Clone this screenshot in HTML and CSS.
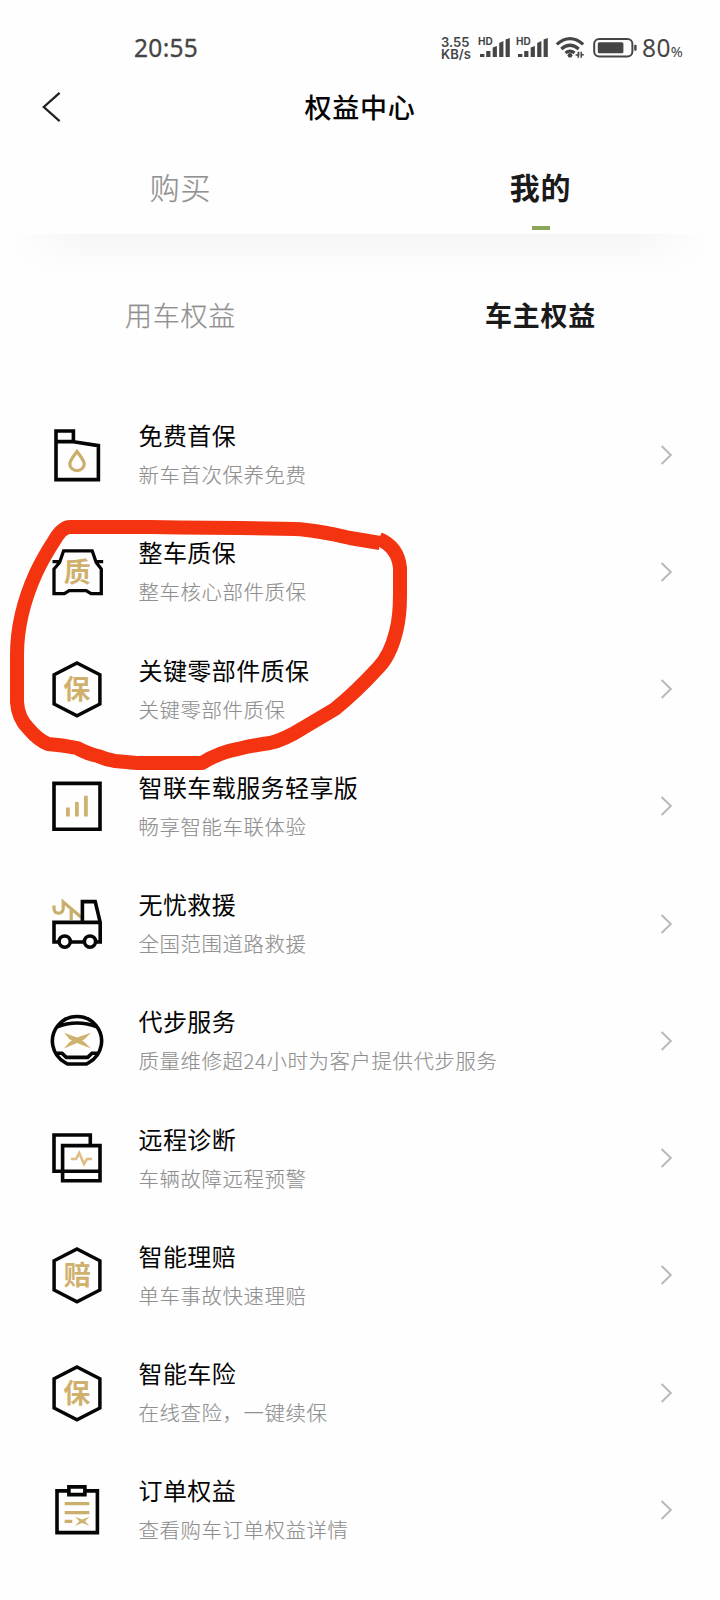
FILE: index.html
```html
<!DOCTYPE html>
<html lang="zh-CN">
<head>
<meta charset="utf-8">
<title>权益中心</title>
<link rel="stylesheet" href="styles.css">
</head>
<body>
<svg class="defs" width="0" height="0">
  <symbol id="next" viewBox="0 0 14 20"><path d="M1.6 1L10.8 10L1.6 19" fill="none" stroke="#b9b9b9" stroke-width="2"/></symbol>
  <symbol id="hex" viewBox="0 0 60 60"><path d="M29 4L51.9 15.8V45L29 56.8L6.1 45V15.8Z" fill="none" stroke="#050505" stroke-width="3.5"/></symbol>
  <symbol id="signal" viewBox="0 0 32 22"><path d="M1 20v-3h4.4v3zM7.2 20v-6h4.2v6zM13.7 20V10.5l4.2-1.5v11zM20.2 20V6l4.2-2v16zM26.6 20V2.5L30.8 1v19z" fill="#454545"/></symbol>
</svg>

<header class="status">
  <time class="clock">20:55</time>
  <div class="speed"><span>3.55</span><span>KB/s</span></div>
  <div class="cell"><svg width="32" height="22"><use href="#signal"/></svg><span class="hd">HD</span></div>
  <div class="cell"><svg width="32" height="22"><use href="#signal"/></svg><span class="hd">HD</span></div>
  <svg class="wifi" width="32" height="24" viewBox="0 0 32 24" fill="none" stroke="#454545" stroke-width="3.2">
    <path d="M1.8 8.4Q15 -3.2 28.2 8.4M6.3 13Q15 5.5 23.7 13M10.5 17Q15 13.3 19.5 17"/>
    <circle cx="15" cy="19.3" r="2.4" fill="#454545" stroke="none"/>
    <path d="M20.6 19h3v-3M23.3 15.8v6M26.2 15.8v6M26 18.8h2.8" stroke-width="1.5"/>
  </svg>
  <svg class="battery" width="46" height="22" viewBox="0 0 46 22">
    <rect x="1.2" y="2" width="38.2" height="17.4" rx="5" fill="none" stroke="#454545" stroke-width="2"/>
    <rect x="4.8" y="5.2" width="25.6" height="11" rx="1.5" fill="#454545"/>
    <rect x="41.2" y="7.8" width="2.4" height="6" rx="1" fill="#454545"/>
  </svg>
  <div class="level">80<small>%</small></div>
</header>

<nav class="titlebar">
  <svg class="back" width="20" height="32" viewBox="0 0 20 32"><path d="M17.6 1.8L1.8 16L17.6 30.2" fill="none" stroke="#222" stroke-width="2.3"/></svg>
  <h1>权益中心</h1>
</nav>

<div class="tabs">
  <div class="tab">购买</div>
  <div class="tab active">我的</div>
</div>
<div class="shade"></div>
<div class="subtabs">
  <div class="tab">用车权益</div>
  <div class="tab active">车主权益</div>
</div>

<main class="list">
  <section class="row">
    <svg class="icon" viewBox="0 0 60 60"><path class="ink" d="M8 6H25.4V16.8L50.4 20.6V54.6H8ZM8 16.6H26"/><path class="gold" d="M29 26.5C25 32 21.8 35.5 21.8 39A7.2 6.6 0 0 0 36.2 39C36.2 35.5 33 32 29 26.5Z"/></svg>
    <div class="text"><h2>免费首保</h2><p>新车首次保养免费</p></div>
    <svg class="next"><use href="#next"/></svg>
  </section>
  <section class="row">
    <svg class="icon" viewBox="0 0 60 60"><path class="ink thin" d="M15.6 8.8H44.2L48.2 20.5L53.3 27V51.6H43L38.2 48.6H21.2L16.4 51.6H6V27L11.6 20.5ZM4.5 19.7H12M47.5 19.7H55.2"/><text x="29.3" y="40.4">质</text></svg>
    <div class="text"><h2>整车质保</h2><p>整车核心部件质保</p></div>
    <svg class="next"><use href="#next"/></svg>
  </section>
  <section class="row">
    <svg class="icon" viewBox="0 0 60 60"><use href="#hex"/><text x="28.8" y="40.4">保</text></svg>
    <div class="text"><h2>关键零部件质保</h2><p>关键零部件质保</p></div>
    <svg class="next"><use href="#next"/></svg>
  </section>
  <section class="row">
    <svg class="icon" viewBox="0 0 60 60"><path class="ink" d="M6 7.4H52V53.2H6Z"/><path class="goldfill" d="M18 31.4h3.8v9.2H18zM27 26h3.8v14.6H27zM36 19.8h3.8v20.8H36z"/></svg>
    <div class="text"><h2>智联车载服务轻享版</h2><p>畅享智能车联体验</p></div>
    <svg class="next"><use href="#next"/></svg>
  </section>
  <section class="row">
    <svg class="icon" viewBox="0 0 60 60"><path class="gold" d="M6 11.5V14.5Q6.2 19.2 10.6 19.2Q15 19 15.2 14.5V8L33.5 23.5M23.2 26V15.5"/><path class="ink" d="M10.5 48H6V28.4H52.2M34.4 28.4V7.6H47.2L52.2 28.4V48H48M22.5 48H36"/><circle class="ink" cx="16.7" cy="47.6" r="5.6"/><circle class="ink" cx="42" cy="47.6" r="5.6"/></svg>
    <div class="text"><h2>无忧救援</h2><p>全国范围道路救援</p></div>
    <svg class="next"><use href="#next"/></svg>
  </section>
  <section class="row">
    <svg class="icon" viewBox="0 0 60 60"><path class="ink" d="M17 51.5A24.6 24.6 0 1 1 41 51.5L38.5 53H19.5ZM8.5 16Q29 8 49.5 16M8 42.2H14L18.3 46.4H39.7L44 42.2H50"/><path class="goldfill" d="M16 21.8L29 26.6L43 21.8L36.5 28.2L34 29.5L36.5 31L43 37.4L29 32L16 37.4L21.5 31L24 29.5L21.5 28.2Z"/></svg>
    <div class="text"><h2>代步服务</h2><p>质量维修超24小时为客户提供代步服务</p></div>
    <svg class="next"><use href="#next"/></svg>
  </section>
  <section class="row">
    <svg class="icon" viewBox="0 0 60 60"><path class="ink" d="M42.3 17V7H6V43.2H52M14.6 17.6H52V52.8H14.6Z"/><path class="gold pulse" d="M23 31H28L31.2 25L36 36L39 31H44"/></svg>
    <div class="text"><h2>远程诊断</h2><p>车辆故障远程预警</p></div>
    <svg class="next"><use href="#next"/></svg>
  </section>
  <section class="row">
    <svg class="icon" viewBox="0 0 60 60"><use href="#hex"/><text x="29.5" y="40.4">赔</text></svg>
    <div class="text"><h2>智能理赔</h2><p>单车事故快速理赔</p></div>
    <svg class="next"><use href="#next"/></svg>
  </section>
  <section class="row">
    <svg class="icon" viewBox="0 0 60 60"><use href="#hex"/><text x="28.8" y="40.4">保</text></svg>
    <div class="text"><h2>智能车险</h2><p>在线查险，一键续保</p></div>
    <svg class="next"><use href="#next"/></svg>
  </section>
  <section class="row">
    <svg class="icon" viewBox="0 0 60 60"><path class="ink" d="M20 10.9H9V52.6H49.4V10.9H38M20.9 6.9H36.9V14.6H20.9Z"/><path class="gold" d="M16.7 23.6H41.3M16.7 32.6H41.3M16.7 41.3H24.3"/><path class="goldfill" d="M27 36.8L34.2 39.6L41.5 36.8L37 41.2L41.5 45.8L34.2 43L27 45.8L31.4 41.2Z"/></svg>
    <div class="text"><h2>订单权益</h2><p>查看购车订单权益详情</p></div>
    <svg class="next"><use href="#next"/></svg>
  </section>
</main>

<svg class="marker" width="420" height="270" viewBox="0 510 420 270"><path d="M380 543L350 538Q316 530 295 529L240 528L180 527.5L150 527H70Q62 527 54 541Q43 558 36 573Q17 615 17 655V702Q18 718 28 728Q38 740 48 744Q62 745 77 748Q88 754 98 756Q107 760 115 761L137 763H202Q220 752 238 749Q255 745 270 743Q284 740 303 728L335 709Q356 692 378 668Q390 656 396 632Q400 617 400 595V568Q398 547 379 539"/></svg>
</body>
</html>
```
FILE: styles.css
```css
* { box-sizing: border-box; }
body {
  margin: 0;
  position: relative;
  width: 720px;
  height: 1600px;
  overflow: hidden;
  background: #fefefe;
  color: #050505;
  font-family: "Noto Sans CJK SC", sans-serif;
}
h1, h2, p { margin: 0; font-weight: 400; }
svg { display: block; flex: none; }
.defs { position: absolute; }

.status {
  display: flex;
  align-items: center;
  height: 76px;
  padding: 20px 0 0 134px;
  color: #454545;
  font-family: "Noto Sans", sans-serif;
}
.clock { width: 307px; padding-bottom: 1px; font-size: 24.5px; letter-spacing: .3px; -webkit-text-stroke: .3px #454545; }
.speed {
  display: flex;
  flex-direction: column;
  width: 38px;
  font: 600 13px/12px "Inter", sans-serif;
}
.speed span { height: 12px; }
.cell { position: relative; width: 38px; }
.hd {
  position: absolute;
  left: -1px;
  top: 0;
  font: 700 10px/9px "Inter", sans-serif;
}
.wifi { margin: 0 6px 0 0; }
.battery { margin-right: 3px; }
.level { padding-bottom: 1px; font-size: 24.5px; letter-spacing: .4px; }
.level small { font-size: 14.5px; }

.titlebar {
  display: grid;
  grid-template-columns: 60px 1fr 60px;
  align-items: center;
  height: 62px;
}
.back { margin-left: 41.5px; }
h1 {
  padding-bottom: 2px;
  text-align: center;
  font-size: 27px;
  font-weight: 500;
  letter-spacing: .7px;
}

.tabs, .subtabs { display: grid; grid-template-columns: 1fr 1fr; }
.tab { padding-left: 1px; text-align: center; color: #8e8e8e; font-weight: 300; -webkit-text-stroke: .25px #999; }
.tab.active { color: #1a1a1a; font-weight: 700; -webkit-text-stroke: 0; }
.tabs { height: 96px; font-size: 30px; line-height: 96px; letter-spacing: .8px; }
.tabs .tab { position: relative; }
.tabs .active::after {
  content: "";
  position: absolute;
  left: 172px;
  bottom: 4px;
  width: 18px;
  height: 4px;
  background: #8aa65a;
}
.shade {
  height: 41px;
  background: linear-gradient(90deg, #fefefe 1%, transparent 12%, transparent 88%, #fefefe 99%), linear-gradient(#f6f6f6, #fefefe);
}
.subtabs { height: 121px; font-size: 27px; line-height: 79px; letter-spacing: .7px; }

.list { display: grid; grid-auto-rows: 117.25px; }
.row { display: flex; align-items: center; padding: 0 46.5px 0 48px; }
.icon { width: 60px; height: 60px; }
.text { flex: 1; padding: 0 0 0 30.5px; }
h2 { margin-bottom: 1px; font-size: 24px; line-height: 38px; letter-spacing: .42px; }
p { font-size: 20.4px; line-height: 38px; letter-spacing: .6px; font-weight: 300; color: #8e8e8e; -webkit-text-stroke: .15px #999; }
.next { width: 14px; height: 20px; }

.ink { fill: none; stroke: #050505; stroke-width: 3.6; }
.ink.thin { stroke-width: 3.3; }
.gold { fill: none; stroke: #c9ae6c; stroke-width: 3.2; }
.gold.pulse { stroke: #e0bd84; stroke-width: 2.6; }
.goldfill { fill: #d0b270; }
.icon text { font-size: 27px; font-weight: 700; fill: #cfb06c; text-anchor: middle; }

.marker { position: absolute; left: 0; top: 510px; pointer-events: none; }
.marker path { fill: none; stroke: #f43411; stroke-width: 14; stroke-linejoin: round; }
```
